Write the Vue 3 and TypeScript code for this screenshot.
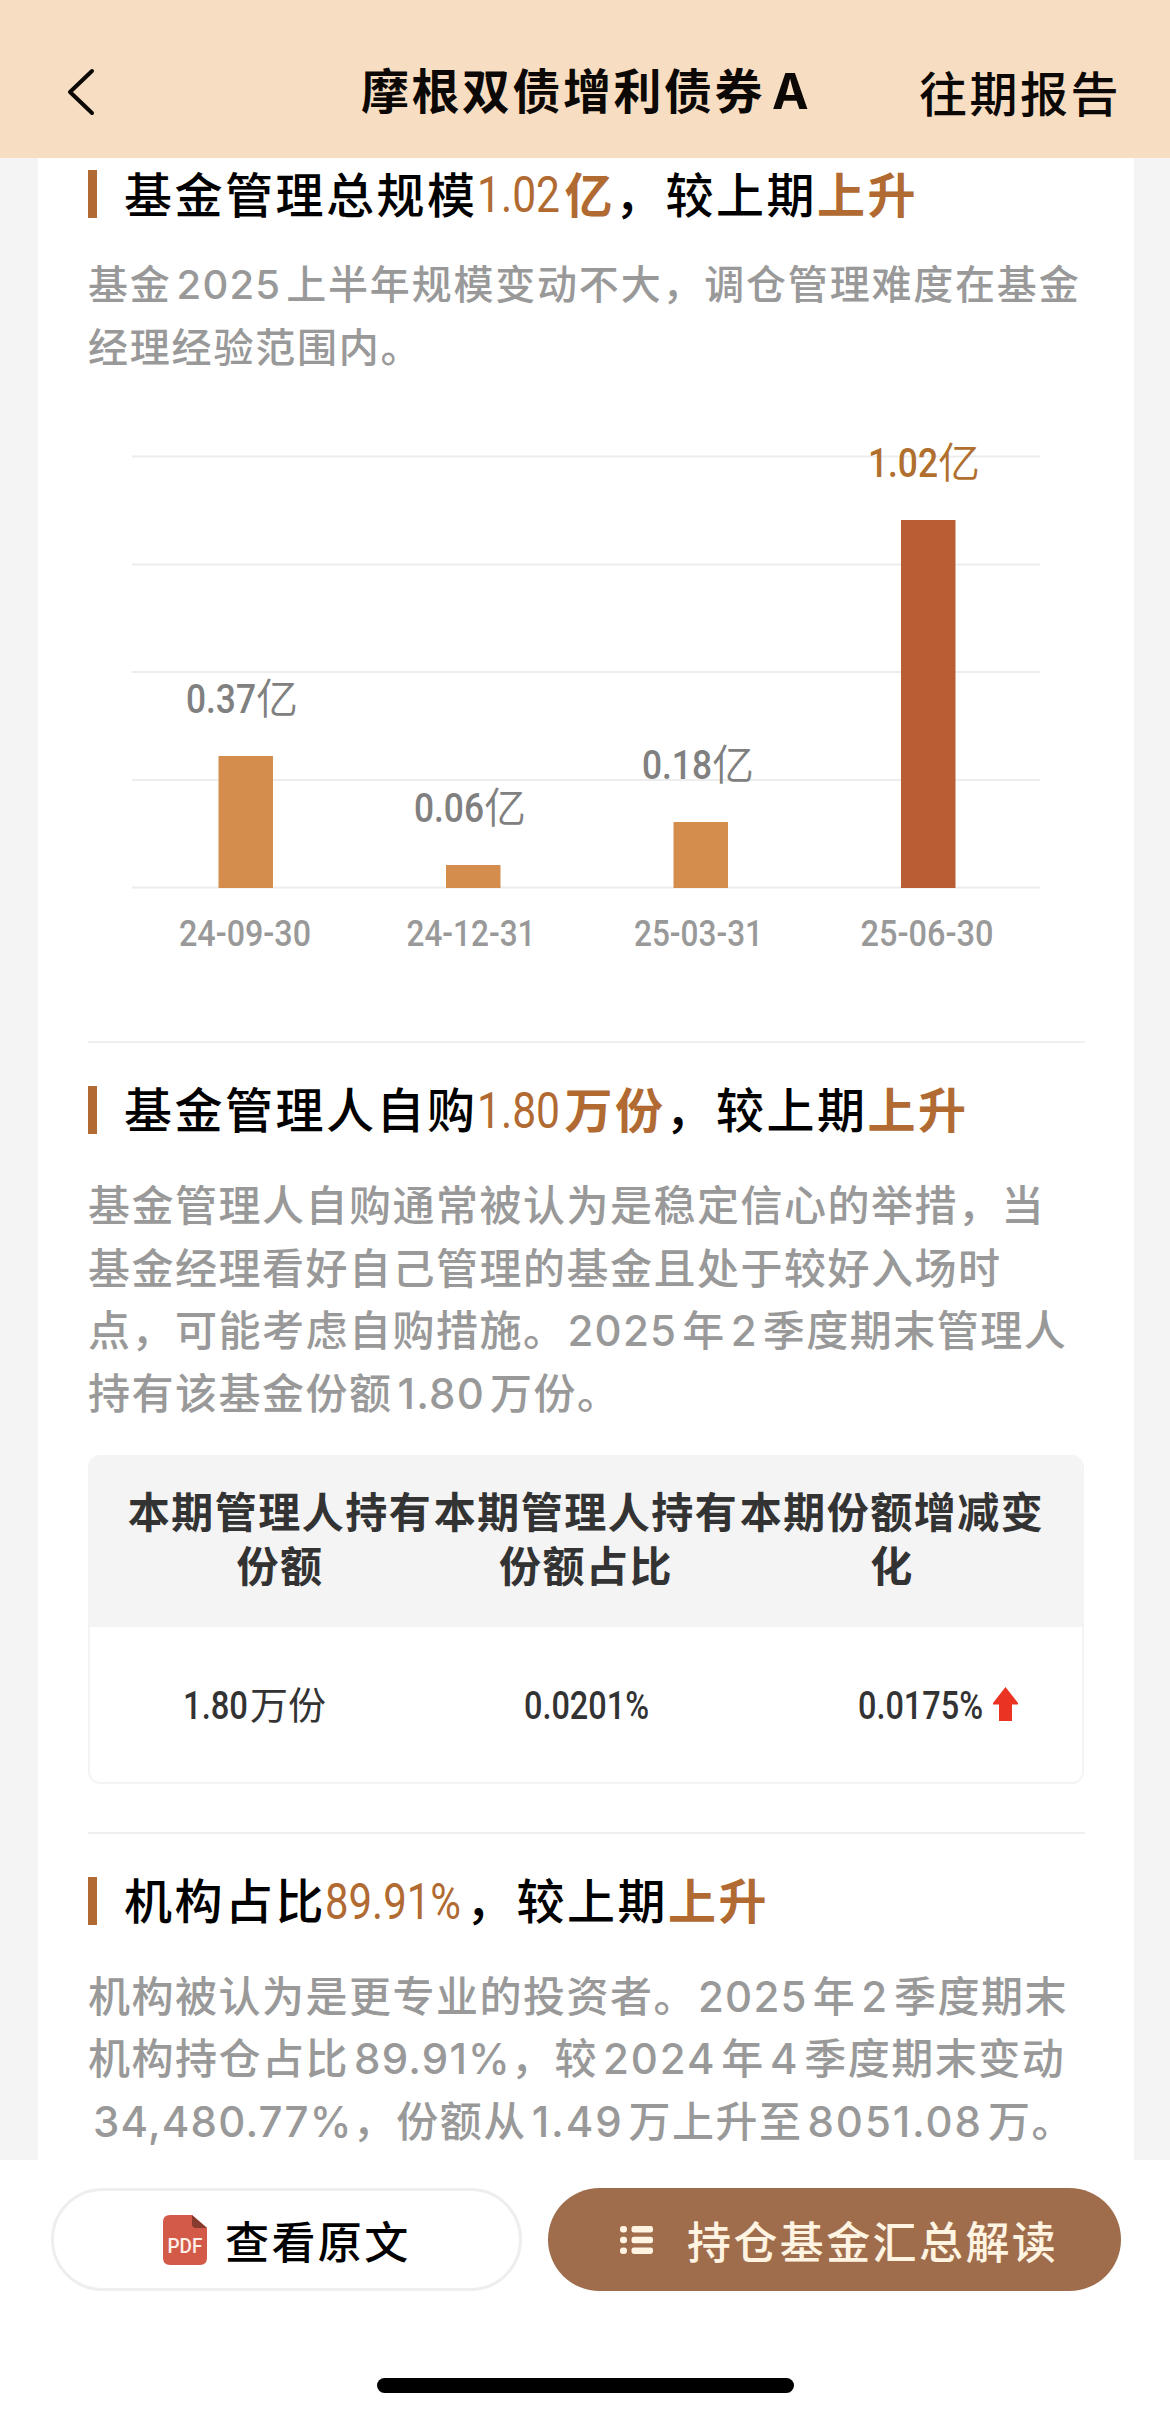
<script setup lang="ts">
interface Segment {
  text: string
  num?: boolean
  // drops the gap on the side that touches full-width punctuation
  tight?: 'left' | 'right'
}
interface HeadingData {
  lead: string
  value: string
  valueWidth: number
  unit: string
}
interface Bar {
  date: string
  label: string
  dateX: number
  dateWidth: number
  x: number
  labelX: number
  top: number
  active?: boolean
}

const t = (text: string): Segment => ({ text })
const n = (text: string, tight?: 'left' | 'right'): Segment => ({ text, num: true, tight })

const scaleHeading: HeadingData = { lead: '基金管理总规模', value: '1.02', valueWidth: 83, unit: '亿' }
const selfHeading: HeadingData = { lead: '基金管理人自购', value: '1.80', valueWidth: 83, unit: '万份' }
const orgHeading: HeadingData = { lead: '机构占比', value: '89.91%', valueWidth: 136, unit: '' }

const scaleText: Segment[][] = [
  [t('基金'), n('2025'), t('上半年规模变动不大，调仓管理难度在基金')],
  [t('经理经验范围内。')],
]
const selfText: Segment[][] = [
  [t('基金管理人自购通常被认为是稳定信心的举措，当')],
  [t('基金经理看好自己管理的基金且处于较好入场时')],
  [t('点，可能考虑自购措施。'), n('2025', 'left'), t('年'), n('2'), t('季度期末管理人')],
  [t('持有该基金份额'), n('1.80'), t('万份。')],
]
const orgText: Segment[][] = [
  [t('机构被认为是更专业的投资者。'), n('2025', 'left'), t('年'), n('2'), t('季度期末')],
  [t('机构持仓占比'), n('89.91%', 'right'), t('，较'), n('2024'), t('年'), n('4'), t('季度期末变动')],
  [n('34,480.77%', 'right'), t('，份额从'), n('1.49'), t('万上升至'), n('8051.08'), t('万。')],
]

const sections = [
  { key: 'scale', heading: scaleHeading, lines: scaleText },
  { key: 'self', heading: selfHeading, lines: selfText },
  { key: 'org', heading: orgHeading, lines: orgText },
]

const gridLines = [16.5, 124.5, 232, 340, 447.5]
const bars: Bar[] = [
  { date: '24-09-30', label: '0.37', x: 130.5, labelX: 98, dateX: 91, dateWidth: 132, top: 316 },
  { date: '24-12-31', label: '0.06', x: 358, labelX: 326, dateX: 318.5, dateWidth: 129, top: 425 },
  { date: '25-03-31', label: '0.18', x: 585.5, labelX: 554, dateX: 546, dateWidth: 129, top: 382 },
  { date: '25-06-30', label: '1.02', x: 813, labelX: 780, dateX: 772.5, dateWidth: 133, top: 80, active: true },
]
</script>

<template>
  <div class="page" lang="zh-CN">
    <header class="nav">
      <svg class="back" width="32" height="50" viewBox="0 0 32 50">
        <path d="M27 4 L5 25 L27 46" fill="none" stroke="#0b0806" stroke-width="4" stroke-linecap="round" stroke-linejoin="round" />
      </svg>
      <h1 class="title">摩根双债增利债券<span class="cls">A</span></h1>
      <a class="history">往期报告</a>
    </header>

    <main class="body">
      <div class="card">
        <section v-for="s in sections" :key="s.key" class="section" :class="s.key">
          <h2 class="heading">
            <i class="mark"></i><span>{{ s.heading.lead }}</span>
            <svg class="hnum" :width="s.heading.valueWidth + 4" height="66">
              <text x="-1" y="51" :textLength="s.heading.valueWidth" lengthAdjust="spacingAndGlyphs">{{ s.heading.value }}</text>
            </svg>
            <b v-if="s.heading.unit">{{ s.heading.unit }}</b><span>，较上期</span><b>上升</b>
          </h2>
          <div class="para">
            <p v-for="(line, i) in s.lines" :key="i">
              <span v-for="(seg, j) in line" :key="j" :class="[{ num: seg.num }, seg.tight && 'tight-' + seg.tight]">{{ seg.text }}</span>
            </p>
          </div>

          <svg v-if="s.key === 'scale'" class="chart" width="997" height="520" viewBox="0 0 997 520">
            <line v-for="y in gridLines" :key="y" x1="44" x2="952" :y1="y" :y2="y" stroke="#ededed" stroke-width="2" />
            <g v-for="b in bars" :key="b.date">
              <rect :x="b.x" :y="b.top" width="54.5" :height="448 - b.top" :fill="b.active ? '#b95d35' : '#d48d4d'" />
              <text class="val" :class="{ active: b.active }" :x="b.labelX" :y="b.top - 43" textLength="70" lengthAdjust="spacingAndGlyphs">{{ b.label }}</text>
              <text class="unit" :class="{ active: b.active }" :x="b.labelX + 70" :y="b.top - 42">亿</text>
              <text class="date" :x="b.dateX" y="506" :textLength="b.dateWidth" lengthAdjust="spacingAndGlyphs">{{ b.date }}</text>
            </g>
          </svg>

          <div v-if="s.key === 'self'" class="table">
            <div class="row head">
              <div>本期管理人持有份额</div>
              <div>本期管理人持有份额占比</div>
              <div>本期份额增减变化</div>
            </div>
            <div class="row data">
              <div class="first">
                <svg class="tnum" width="66" height="50"><text x="-1" y="40" textLength="65" lengthAdjust="spacingAndGlyphs">1.80</text></svg>
                <span>万份</span>
              </div>
              <div>
                <svg class="tnum" width="126" height="50"><text x="1" y="40" textLength="125" lengthAdjust="spacingAndGlyphs">0.0201%</text></svg>
              </div>
              <div class="last">
                <svg class="tnum" width="126" height="50"><text x="1" y="40" textLength="125" lengthAdjust="spacingAndGlyphs">0.0175%</text></svg>
                <svg class="up" width="25" height="34" viewBox="0 0 25 34"><path d="M12.5 0 L25 16 V17.5 H19 V34 H6 V17.5 H0 V16 Z" fill="#ea3323" /></svg>
              </div>
            </div>
          </div>
        </section>
      </div>
    </main>

    <footer class="bottom">
      <div class="actions">
        <button class="btn ghost">
          <svg width="44" height="50" viewBox="0 0 44 50">
            <path d="M7 0 H29 L44 13 V43 Q44 50 37 50 H7 Q0 50 0 43 V7 Q0 0 7 0 Z" fill="#d35a48" />
            <path d="M29 0 L44 13 H33 Q29 13 29 9 Z" fill="#873a2e" />
            <text x="4.5" y="37.5" textLength="35" lengthAdjust="spacingAndGlyphs" class="pdf">PDF</text>
          </svg>
          <span>查看原文</span>
        </button>
        <button class="btn solid">
          <svg width="33" height="28" viewBox="0 0 33 28" fill="#fff3e2">
            <g v-for="y in [0, 10.7, 21.4]" :key="y">
              <rect x="0" :y="y" width="7" height="6.6" rx="3" />
              <rect x="11.5" :y="y" width="21.5" height="6.6" rx="2.4" />
            </g>
          </svg>
          <span>持仓基金汇总解读</span>
        </button>
      </div>
      <div class="home"></div>
    </footer>
  </div>
</template>

<style>
body {
  margin: 0;
}
</style>

<style scoped>
.page {
  width: 1170px;
  height: 2417px;
  display: flex;
  flex-direction: column;
  overflow: hidden;
  background: #f4f4f4;
  font-family: 'Noto Sans CJK SC', sans-serif;
}
h1,
h2,
p {
  margin: 0;
  white-space: nowrap;
}
.nav {
  flex: none;
  box-sizing: border-box;
  height: 158px;
  display: flex;
  align-items: flex-start;
  padding: 57px 0 0 65px;
  background: #f7dec2;
  color: #0b0806;
}
.back {
  margin-top: 10px;
}
.title {
  margin-left: 264px;
  width: 558px;
  line-height: 62px;
  font-size: 48px;
  letter-spacing: 2.5px;
  font-weight: 700;
}
.cls {
  font-family: Inter, sans-serif;
  font-size: 49px;
  margin-left: 7px;
}
.history {
  font-size: 48px;
  line-height: 68px;
  letter-spacing: 2.5px;
  font-weight: 500;
}
.body {
  flex: none;
  height: 2002px;
  overflow: hidden;
  padding: 0 36px 0 38px;
}
.card {
  height: 100%;
  background: #fff;
  padding: 0 49px 0 50px;
}
.section + .section {
  border-top: 2px solid #efefef;
}
.heading {
  display: flex;
  align-items: center;
  height: 48px;
  padding-top: 12px;
  font-size: 48px;
  line-height: 72px;
  letter-spacing: 2.5px;
  font-weight: 500;
  color: #000;
}
.heading span,
.heading b {
  margin-top: -5px;
}
.self .heading,
.org .heading {
  padding-top: 43px;
}
.heading b {
  font-weight: 700;
  color: #b06a32;
}
.mark {
  width: 9px;
  height: 48px;
  margin-right: 27px;
  background: #b06a32;
}
.hnum {
  overflow: visible;
  font: 400 50px Roboto, sans-serif;
  letter-spacing: 0;
  fill: #b06a32;
}
.para {
  margin-top: 33px;
  color: #999;
  font-weight: 500;
  font-size: 40px;
  letter-spacing: 1.8px;
}
.para p {
  height: 62.7px;
  line-height: 62.7px;
}
.self .para,
.org .para {
  margin-top: 38px;
  font-size: 42px;
  letter-spacing: 1.5px;
}
.num {
  font-family: Inter, sans-serif;
  margin: 0 5px;
  letter-spacing: 1.2px;
}
.org .num:not(.tight-left, .tight-right) {
  letter-spacing: 1.9px;
}
.tight-left {
  margin-left: 1px;
}
.tight-right {
  margin-right: 0;
}
.chart {
  display: block;
  margin: 64px 0 80.6px;
  overflow: visible;
}
.val {
  font: 500 41px Roboto, sans-serif;
  fill: #808080;
}
.unit {
  font-size: 42px;
  font-weight: 350;
  fill: #808080;
}
.date {
  font: 500 36px Roboto, sans-serif;
  fill: #999;
}
.val.active,
.unit.active {
  fill: #b06f2e;
}
.table {
  box-sizing: border-box;
  width: 996px;
  height: 329px;
  margin: 32px 0 48px;
  border: 2px solid #f4f4f4;
  border-radius: 12px;
  overflow: hidden;
}
.row {
  display: flex;
  padding: 0 37px;
}
.row > div {
  width: 306px;
  flex: none;
}
.head {
  height: 170px;
  background: #f4f4f4;
  text-align: center;
}
.head > div {
  padding-top: 26px;
  height: 144px;
  font-size: 42px;
  line-height: 54px;
  letter-spacing: 1.5px;
  font-weight: 700;
  color: #333;
}
.data {
  height: 155px;
  align-items: center;
  color: #333;
  font-size: 38px;
}
.data > div {
  display: flex;
  justify-content: center;
  align-items: center;
}
.data span {
  margin-top: -3px;
}
.tnum {
  overflow: visible;
  font: 500 38px Roboto, sans-serif;
  fill: #333;
}
.data .first {
  padding-right: 50px;
  width: 256px;
}
.data .last {
  padding-left: 90px;
  width: 216px;
}
.up {
  margin-left: 10px;
}
.bottom {
  flex: 1;
  display: flex;
  flex-direction: column;
  align-items: center;
  background: #fff;
}
.actions {
  align-self: stretch;
  display: flex;
  gap: 26px;
  padding: 28px 49px 0 51px;
}
.btn {
  box-sizing: border-box;
  height: 103px;
  border-radius: 52px;
  border: 0;
  display: flex;
  align-items: center;
  padding: 0;
  font-family: inherit;
  font-size: 44px;
  letter-spacing: 2.4px;
  font-weight: 500;
}
.ghost {
  width: 471px;
  padding-left: 109px;
  border: 3px solid #eee;
  background: #fff;
  color: #000;
}
.ghost span {
  margin-left: 18px;
}
.pdf {
  font: 500 20px Roboto, sans-serif;
  letter-spacing: 0;
  fill: #fdeee8;
}
.solid {
  width: 573px;
  padding-left: 72px;
  background: #9f6d4b;
  color: #fff3e2;
}
.solid span {
  margin-left: 34px;
}
.home {
  width: 417px;
  height: 15px;
  margin-top: 87px;
  border-radius: 8px;
  background: #000;
}
</style>
